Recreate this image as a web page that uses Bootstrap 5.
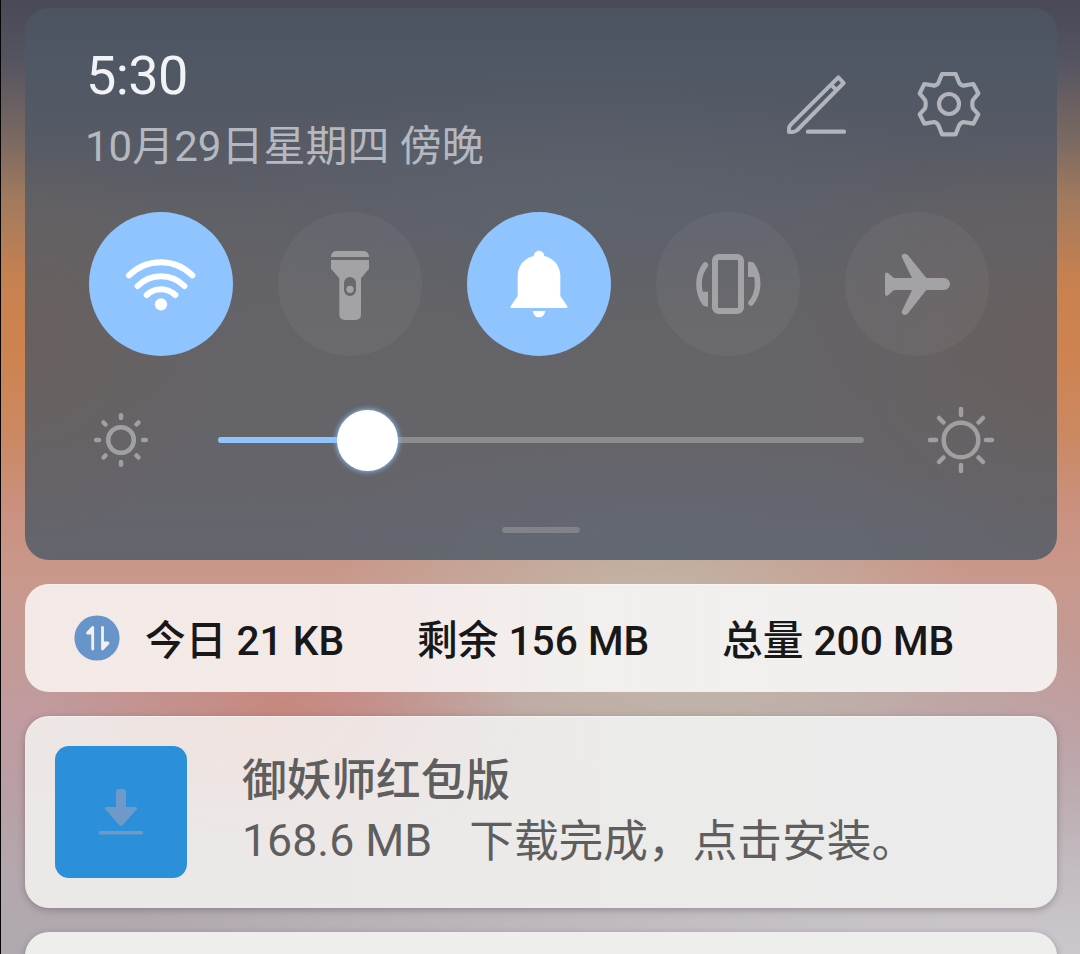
<!DOCTYPE html>
<html lang="zh-CN">
<head>
<meta charset="utf-8">
<meta name="viewport" content="width=device-width, initial-scale=1">
<title>通知栏</title>
<link rel="stylesheet" href="https://cdn.jsdelivr.net/npm/bootstrap@5.3.0/dist/css/bootstrap.min.css">
<style>
  html, body { height: 100%; }
  body {
    font-family: Roboto, "Noto Sans CJK SC", sans-serif;
    overflow: hidden;
    background: #b9a9a8;
  }
  .shade {
    height: 954px;
    padding: 8px 23px 0 24px;
    border-left: 1px solid #050506;
    overflow: hidden;
    background:
      radial-gradient(ellipse 240px 95px at 280px 706px, rgba(199,133,121,.85), rgba(199,133,121,0)),
      radial-gradient(ellipse 330px 190px at 650px 620px, rgba(192,184,168,1), rgba(192,184,168,0)),
      radial-gradient(ellipse 420px 150px at 760px 740px, rgba(188,182,178,.8), rgba(188,182,178,0)),
      radial-gradient(ellipse 900px 260px at 1000px 990px, rgba(202,198,203,1) 20%, rgba(200,194,199,0)),
      linear-gradient(to bottom, #494957 0, #555461 60px, #7b6962 140px, #a27a5e 200px, #c78150 280px, #ce834f 350px, #cb8860 430px, #ca9180 510px, #c9988c 580px, #c29a96 660px, #c09ba0 720px, #b8a0a5 800px, #b3a8ae 880px, #afa9b0 954px);
  }
  .panel {
    height: 552px;
    border-radius: 24px;
    padding: 36px 68px 0 64px;
    background:
      radial-gradient(ellipse 380px 110px at 640px 545px, rgba(98,106,118,.7), rgba(98,106,118,0)),
      radial-gradient(ellipse 260px 220px at 1032px 340px, rgba(105,94,92,.8), rgba(105,94,92,0)),
      radial-gradient(ellipse 200px 200px at 0 330px, rgba(106,96,92,.8), rgba(106,96,92,0)),
      radial-gradient(ellipse 360px 130px at 560px 190px, rgba(91,98,110,.7), rgba(91,98,110,0)),
      linear-gradient(to bottom, #4c5461 0, #4f5864 60px, #565a65 130px, #606167 210px, #646367 300px, #656468 400px, #65646b 480px, #63656d 552px);
  }
  .clock { font-size: 54px; line-height: 64px; color: #f1f3f6; letter-spacing: -.6px; margin-left: -3px; }
  .today { font-size: 42px; line-height: 50px; color: #b5b8bf; margin: 14px 0 0 -4px; white-space: nowrap; }
  .tools { gap: 67px; margin: 24px 7px 0 0; color: #b1b4bb; }
  .toggles { margin-top: 40px; }
  .toggle { width: 144px; height: 144px; border-radius: 50%; background: rgba(255,255,255,.045); color: #a3a2a5; }
  .toggle.on { background: #8fc4ff; color: #fff; }
  .toggle svg { width: 144px; height: 144px; display: block; }
  .bright { height: 70px; margin: 49px -12px 0 0; color: #a09fa2; }
  .track { width: 646px; height: 6px; border-radius: 3px; background: #8d8d91; position: relative; margin-left: 65px; flex: none; }
  .level { height: 6px; border-radius: 3px; background: #8fc4ff; }
  .knob { position: absolute; top: -27.5px; width: 61px; height: 61px; margin-left: -30.5px; border-radius: 50%; background: #fff; box-shadow: 0 0 5px 1px rgba(143,196,255,.85); }
  .sun-high { margin-left: 62px; }
  .grip { width: 78px; height: 6px; border-radius: 3px; background: #818389; margin: 52px 0 0 413px; }
  .notice { border-radius: 24px; margin-top: 24px; }
  .usage {
    height: 108px; padding-left: 49px;
    background: linear-gradient(to right, #f3eae8 0, #f4e9e7 30%, #f2efed 55%, #f1f0ef 70%, #f3edec 100%);
    box-shadow: inset 0 1px 0 rgba(255,255,255,.3);
    font-size: 40.7px; line-height: 50px; font-weight: 500; color: #181818; white-space: nowrap;
  }
  .usage span { padding-top: 5px; flex: none; }
  .task {
    height: 192px; padding: 30px;
    background:
      radial-gradient(ellipse 300px 150px at 230px 0, rgba(240,225,222,.9), rgba(240,225,222,0)),
      linear-gradient(to right, #ebe8e7, #ebebea 60%, #ecebec);
    box-shadow: 0 2px 7px rgba(60,45,50,.32), inset 0 1px 1px rgba(255,255,255,.5);
    color: #5f5e5e; font-size: 44.7px; line-height: 60px; white-space: nowrap;
  }
  .app { width: 132px; height: 132px; border-radius: 14px; background: #2b90d9; color: #6f99c9; }
  .words { margin: 5px 0 0 55px; }
  .status { margin-left: 37px; position: relative; top: 1px; }
  .next { height: 120px; background: #eeeeed; box-shadow: 0 2px 7px rgba(60,45,50,.32); }
</style>
</head>
<body>
<main class="shade">
  <section class="panel">
    <header class="d-flex justify-content-between align-items-start">
      <div>
        <div class="clock">5:30</div>
        <div class="today">10月29日星期四 傍晚</div>
      </div>
      <div class="tools d-flex">
        <svg width="64" height="72" viewBox="75 54 192 216" fill="none" stroke="currentColor" stroke-width="12" stroke-linejoin="round" stroke-linecap="round">
          <path d="M235 82 251 99 112 240Q105 246 97 246L87 246 87 236Q87 229 93 223ZM213 104 229 120"/>
          <path d="M144 245H252" stroke-width="13"/>
        </svg>
        <svg width="66" height="72" viewBox="468 54 198 216" fill="none" stroke="currentColor" stroke-width="12.500" stroke-linejoin="round">
          <path d="M546 72H587L597 97Q600 104 610 107L640 102 655 130 639 150Q637 153 637 162T639 175L655 193 640 221 610 216Q600 219 597 227L587 253H546L536 227Q533 219 523 216L493 221 479 193 495 175Q497 171 497 162T495 150L479 130 493 102 523 107Q533 104 536 97Z"/>
          <circle cx="567" cy="162" r="30"/>
        </svg>
      </div>
    </header>

    <div class="toggles d-flex justify-content-between">
      <div class="toggle on">
        <svg viewBox="27 36 432 432" fill="none" stroke="currentColor" stroke-width="18" stroke-linecap="round">
          <path d="M147 226A134 134 0 0 1 337 226M173 258A98 98 0 0 1 313 258M200 285A62 62 0 0 1 286 285"/>
          <circle cx="243" cy="313" r="18.500" fill="currentColor" stroke="none"/>
        </svg>
      </div>
      <div class="toggle">
        <svg viewBox="594 36 432 432" fill="currentColor" fill-rule="evenodd">
          <path d="M753 171V168Q756 153 771 153H849Q864 153 867 168V171ZM753 180H867V206L843 235V343Q843 360 826 360H795Q778 360 778 343V235L753 206ZM792 249V270A18 18 0 0 0 828 270V249A18 18 0 0 0 792 249Z"/>
          <circle cx="810" cy="268" r="11"/>
        </svg>
      </div>
      <div class="toggle on">
        <svg viewBox="51 36 432 432" fill="currentColor">
          <path d="M267 152C276 152 282 159 283 168C312 175 331 198 331 228V288L352 319Q353 324 349 324H185Q180 324 182 319L203 288V228C203 198 222 175 251 168C252 159 258 152 267 152ZM248 333H286Q282 352 267 352T248 333Z"/>
        </svg>
      </div>
      <div class="toggle">
        <svg viewBox="618 36 432 432" fill="none" stroke="currentColor" stroke-width="18" stroke-linecap="round">
          <rect x="795" y="171" width="78" height="162" rx="11"/>
          <path d="M766 195C742 226 740 274 764 309M903 309C928 278 930 230 906 195" stroke-width="17"/>
          <path d="M754 275H774V319Q769 322 764 318L750 290ZM914 231H894V187Q898 182 904 186L920 215Z" fill="currentColor" stroke="none"/>
        </svg>
      </div>
      <div class="toggle">
        <svg viewBox="45 36 432 432" fill="currentColor">
          <path d="M165 223Q167 214 174 219L192 234H246L217 175C210 163 226 156 234 166L289 234H342A18 18 0 0 1 342 270H289L234 340C226 350 210 343 217 331L246 270H192L174 286Q167 291 165 282Z"/>
        </svg>
      </div>
    </div>

    <div class="bright d-flex align-items-center">
      <svg class="flex-shrink-0" width="64" height="64" viewBox="-32 -32 64 64" fill="none" stroke="currentColor" stroke-width="4.500" stroke-linecap="round">
        <circle r="12.800"/>
        <path d="M0-24.800V-22M0 24.800V22M-24.800 0H-22M24.800 0H22M-17.500-17.500-15.500-15.500M17.500 17.500 15.500 15.500M17.500-17.500 15.500-15.500M-17.500 17.500-15.500 15.500"/>
      </svg>
      <div class="track">
        <div class="level" style="width:149px"></div>
        <div class="knob" style="left:149px"></div>
      </div>
      <svg class="sun-high flex-shrink-0" width="70" height="70" viewBox="-35 -35 70 70" fill="none" stroke="currentColor" stroke-width="4.500" stroke-linecap="round">
        <circle r="17.300"/>
        <path d="M0-31V-25M0 31V25M-31 0H-25M31 0H25M-22-22-17.500-17.500M22 22 17.500 17.500M22-22 17.500-17.500M-22 22-17.500 17.500"/>
      </svg>
    </div>
    <div class="grip"></div>
  </section>

  <section class="notice usage d-flex align-items-center">
    <svg class="flex-shrink-0" width="46" height="46" viewBox="0 0 46 46">
      <circle cx="23" cy="23" r="22.600" fill="#6795c9"/>
      <path d="M18.700 34V12.500L13.500 18H18.700M28.500 12.500V34L34 28H28.500" fill="#f5f0f0" stroke="#f5f0f0" stroke-width="2.800" stroke-linecap="round" stroke-linejoin="round"/>
    </svg>
    <span style="margin-left:25px;width:272px">今日 21 KB</span>
    <span style="width:305px">剩余 156 MB</span>
    <span>总量 200 MB</span>
  </section>

  <section class="notice task d-flex">
    <div class="app">
      <svg class="d-block" width="132" height="132" viewBox="0 0 132 132" fill="currentColor">
        <path d="M61 46Q61 43 64 43H68Q71 43 71 46V61H80Q84 61 81 64L68 79Q66 81 64 79L51 64Q48 61 52 61H61Z"/>
        <rect x="44" y="85" width="44" height="3.400" rx="1"/>
      </svg>
    </div>
    <div class="words">
      <div style="font-weight:500">御妖师红包版</div>
      <div><span>168.6 MB</span><span class="status">下载完成，点击安装。</span></div>
    </div>
  </section>

  <section class="notice next"></section>
</main>
<script src="https://cdn.jsdelivr.net/npm/bootstrap@5.3.0/dist/js/bootstrap.bundle.min.js"></script>
</body>
</html>
